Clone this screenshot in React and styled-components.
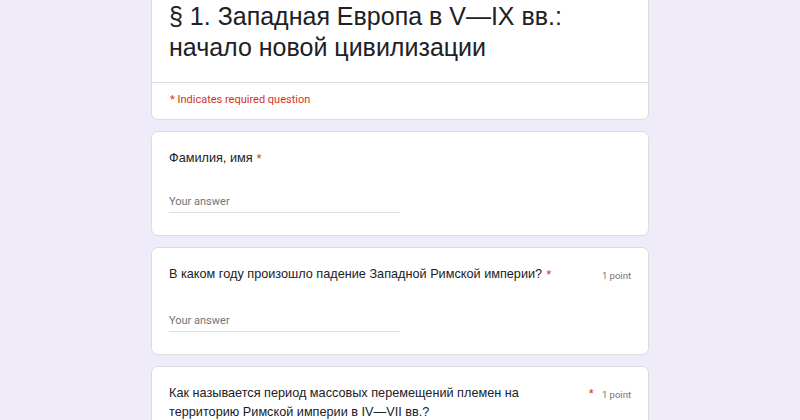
import React from "react";
import styled, { createGlobalStyle } from "styled-components";

const Global = createGlobalStyle`
  html, body { margin: 0; padding: 0; background: #f0ebf8; }
  body { font-family: Roboto, "Liberation Sans", Arial, sans-serif; }
`;

const Page = styled.div`
  width: 800px;
  height: 420px;
  overflow: hidden;
  background: #f0ebf8;
`;

const Column = styled.div`
  width: 498px;
  margin: -20px auto 0;
  display: flex;
  flex-direction: column;
  gap: 11px;
`;

const Card = styled.div`
  box-sizing: border-box;
  background: #ffffff;
  border: 1px solid #dadce0;
  border-radius: 7px;
`;

const TitleBlock = styled.div`
  padding: 20px 17px 19px;
  border-bottom: 1px solid #dadce0;
`;

const Title = styled.h1`
  margin: 0;
  font-family: "Liberation Sans", Arial, sans-serif;
  font-weight: 400;
  font-size: 25px;
  line-height: 31px;
  color: #202124;
`;

const RequiredNote = styled.div`
  padding: 9px 18px 11px;
  font-family: Roboto, sans-serif;
  font-size: 11px;
  line-height: 16px;
  color: #d93025;
`;

const QuestionCard = styled(Card)`
  padding: 17px 17px 22px;
`;

const LabelRow = styled.div`
  display: flex;
  align-items: flex-start;
`;

const LabelText = styled.span`
  font-family: "Liberation Sans", Arial, sans-serif;
  font-size: 12.7px;
  line-height: 19px;
  color: #202124;
`;

const Star = styled.span`
  color: #d93025;
  font-family: "Liberation Sans", Arial, sans-serif;
  font-size: 13px;
  line-height: 19px;
  padding-left: 4px;
  flex: none;
`;

const Points = styled.span`
  margin-left: auto;
  padding-left: 8px;
  flex: none;
  font-family: Roboto, sans-serif;
  font-size: 9.5px;
  line-height: 22px;
  color: #70757a;
`;

const Answer = styled.div`
  margin-top: 26px;
  width: 50%;
  border-bottom: 1px solid #e0e0e0;
  padding-bottom: 2px;
  font-family: Roboto, sans-serif;
  font-size: 11px;
  line-height: 16px;
  color: #70757a;
`;

function Question({ text, points }) {
  return (
    <QuestionCard>
      <LabelRow>
        <LabelText>{text}</LabelText>
        <Star>*</Star>
        {points && <Points>{points}</Points>}
      </LabelRow>
      <Answer>Your answer</Answer>
    </QuestionCard>
  );
}

export default function App() {
  return (
    <Page>
      <Global />
      <Column>
        <Card>
          <TitleBlock>
            <Title>
              § 1. Западная Европа в V—IX вв.:
              <br />
              начало новой цивилизации
            </Title>
          </TitleBlock>
          <RequiredNote>* Indicates required question</RequiredNote>
        </Card>
        <Question text="Фамилия, имя" />
        <Question
          text="В каком году произошло падение Западной Римской империи?"
          points="1 point"
        />
        <Question
          text="Как называется период массовых перемещений племен на территорию Римской империи в IV—VII вв.?"
          points="1 point"
        />
      </Column>
    </Page>
  );
}
